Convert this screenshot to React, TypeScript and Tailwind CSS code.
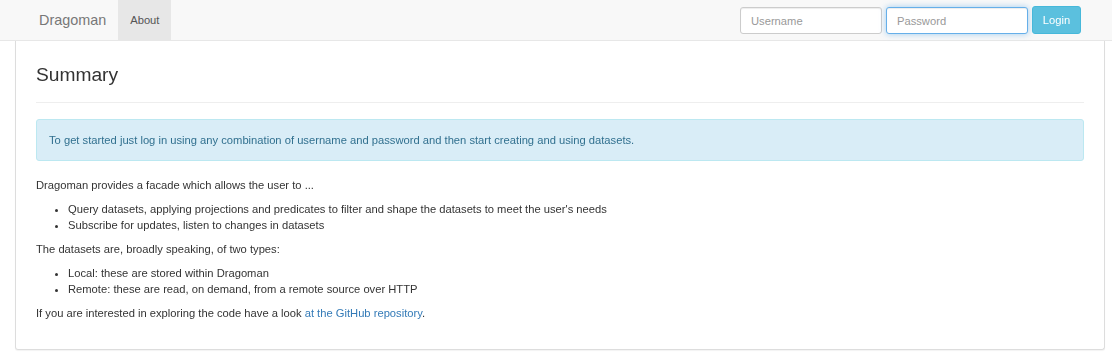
import React from "react";

const font = { fontFamily: '"Liberation Sans", Arial, sans-serif' };

function Navbar() {
  return (
    <nav className="flex h-[41px] items-start border-b border-[#e7e7e7] bg-[#f8f8f8] pl-[27px] pr-[31px]">
      <a className="px-[12px] text-[14.4px] leading-[40px] text-[#777]">Dragoman</a>
      <a className="h-[40px] bg-[#e7e7e7] px-[12px] text-[11.2px] leading-[40px] text-[#555]">About</a>
      <form className="ml-auto flex gap-[4px] pt-[7px]">
        <input
          placeholder="Username"
          className="h-[27px] w-[142px] rounded-[3px] border border-[#ccc] bg-white px-[10px] text-[11.2px] text-[#555] shadow-[inset_0_1px_1px_rgba(0,0,0,0.075)] outline-none placeholder:text-[#999]"
        />
        <input
          type="password"
          placeholder="Password"
          autoFocus
          className="h-[27px] w-[142px] rounded-[3px] border border-[#66afe9] bg-white px-[10px] text-[11.2px] text-[#555] shadow-[inset_0_1px_1px_rgba(0,0,0,0.075),0_0_6px_rgba(102,175,233,0.6)] outline-none placeholder:text-[#999]"
        />
        <button
          type="button"
          className="-mt-[1px] h-[28px] w-[49px] rounded-[3px] border border-[#46b8da] bg-[#5bc0de] text-[11.2px] text-white"
        >
          Login
        </button>
      </form>
    </nav>
  );
}

export default function App() {
  return (
    <div className="min-h-[361px] bg-white text-[11.2px] leading-[16px] text-[#333]" style={font}>
      <Navbar />
      <div className="ml-[15px] w-[1090px] rounded-b-[3px] border border-t-0 border-[#ddd] px-[20px] pb-[28px] shadow-[0_1px_1px_rgba(0,0,0,0.05)]">
        <div className="mb-[16px] border-b border-[#eee] pb-[17px] pt-[23px]">
          <h3 className="text-[19.2px] leading-[21px] text-[#333]">Summary</h3>
        </div>
        <div className="mb-[16px] rounded-[3px] border border-[#bce8f1] bg-[#d9edf7] px-[12px] py-[12px] text-[#31708f]">
          To get started just log in using any combination of username and password and then start creating and using datasets.
        </div>
        <p className="mb-[8px]">Dragoman provides a facade which allows the user to ...</p>
        <ul className="mb-[8px] list-disc pl-[32px]">
          <li>Query datasets, applying projections and predicates to filter and shape the datasets to meet the user's needs</li>
          <li>Subscribe for updates, listen to changes in datasets</li>
        </ul>
        <p className="mb-[8px]">The datasets are, broadly speaking, of two types:</p>
        <ul className="mb-[8px] list-disc pl-[32px]">
          <li>Local: these are stored within Dragoman</li>
          <li>Remote: these are read, on demand, from a remote source over HTTP</li>
        </ul>
        <p>
          If you are interested in exploring the code have a look{" "}
          <a className="text-[#337ab7]">at the GitHub repository</a>.
        </p>
      </div>
    </div>
  );
}
